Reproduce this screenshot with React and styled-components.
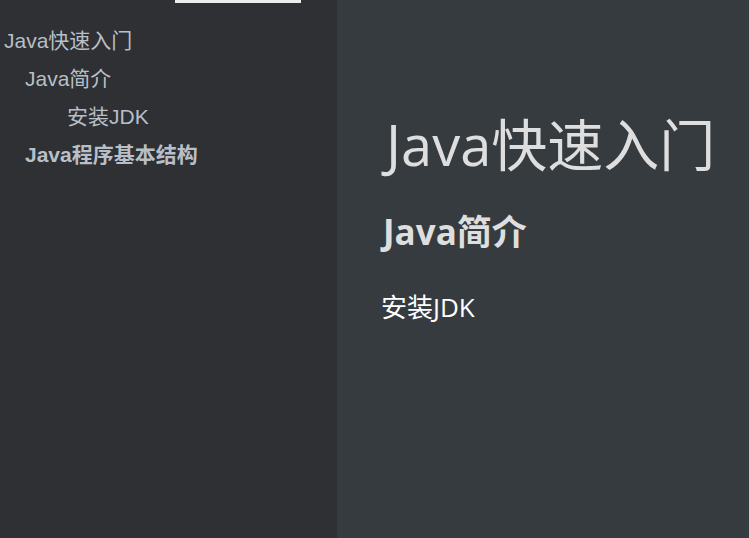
import React from "react";
import styled, { createGlobalStyle } from "styled-components";

const Global = createGlobalStyle`
  html, body, #root { margin: 0; padding: 0; height: 100%; }
  body { background: #363b40; overflow: hidden; }
`;

const outline = [
  { level: 1, text: "Java快速入门" },
  { level: 2, text: "Java简介" },
  { level: 3, text: "安装JDK" },
  { level: 2, text: "Java程序基本结构", bold: true },
];

const indent = { 1: 4, 2: 25, 3: 67 };

const App = () => {
  return (
    <Page>
      <Global />
      <Sidebar>
        <TopBar />
        <Outline>
          {outline.map((item) => (
            <OutlineItem key={item.text} $indent={indent[item.level]} $bold={item.bold}>
              {item.text}
            </OutlineItem>
          ))}
        </Outline>
      </Sidebar>
      <Main>
        <H1>Java快速入门</H1>
        <H2>Java简介</H2>
        <H3>安装JDK</H3>
      </Main>
    </Page>
  );
};

const Page = styled.div`
  display: flex;
  height: 538px;
  width: 749px;
`;

const Sidebar = styled.aside`
  width: 337px;
  flex-shrink: 0;
  background: #2e3033;
  display: flex;
  flex-direction: column;
`;

const TopBar = styled.div`
  margin-left: 175px;
  width: 126px;
  height: 3px;
  background: #ececec;
`;

const Outline = styled.ul`
  list-style: none;
  margin: 0;
  padding: 26px 0 0;
  display: flex;
  flex-direction: column;
  gap: 14px;
`;

const OutlineItem = styled.li`
  padding-left: ${(p) => p.$indent}px;
  font-family: "Liberation Sans", "Noto Sans CJK SC", sans-serif;
  font-size: 21px;
  line-height: 24px;
  color: #b8bfc6;
  font-weight: ${(p) => (p.$bold ? 700 : 400)};
`;

const Main = styled.main`
  flex: 1;
  padding: 106px 0 0 46px;
  font-family: "Open Sans", "Noto Sans CJK SC", sans-serif;
`;

const H1 = styled.h1`
  margin: 0 0 0 3px;
  font-size: 56px;
  font-weight: 400;
  line-height: 76px;
  color: #dedede;
`;

const H2 = styled.h2`
  margin: 25px 0 0;
  font-size: 35px;
  font-weight: 700;
  line-height: 50px;
  color: #dedede;
`;

const H3 = styled.h3`
  margin: 32px 0 0 -2px;
  font-size: 26px;
  font-weight: 400;
  line-height: 36px;
  color: #ffffff;
`;

export default App;
